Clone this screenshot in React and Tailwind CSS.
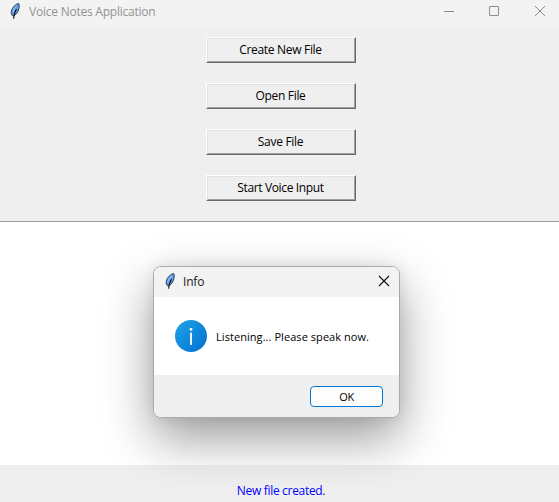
function Feather() {
  return (
    <svg width="10" height="16" viewBox="0 0 10 16" className="shrink-0">
      <path d="M8.7 .5 C5.8 .8 2 4.6 1.3 8.4 C1 10.4 1.5 12 2.6 12.8 L4.8 12.2 C7 10.6 8.6 8 9.1 4.6 C9.4 2.8 9.3 1.4 8.7 .5Z" fill="#5d9be6" stroke="#2b3440" strokeWidth=".9" />
      <path d="M6.6 3 C4.8 4.6 3.2 7 2.8 9.4" fill="none" stroke="#8fbcf2" strokeWidth="1.1" />
      <path d="M6.4 6.2 C4.8 8.8 3.9 11 3.6 15.6" fill="none" stroke="#000" strokeWidth="1.1" />
    </svg>
  );
}

const labels = [
  { text: "Create New File", tracking: "tracking-[-0.31px]" },
  { text: "Open File", tracking: "tracking-[-0.31px]" },
  { text: "Save File", tracking: "tracking-[-0.31px]" },
  { text: "Start Voice Input", tracking: "tracking-[-0.36px]" },
];

function TkButton({ text, tracking }) {
  return (
    <button className="h-[26px] w-[150px] border border-t-white border-l-white border-r-[#696969] border-b-[#696969]">
      <span className={`flex h-full items-center justify-center border border-t-[#e3e3e3] border-l-[#e3e3e3] border-r-[#a0a0a0] border-b-[#a0a0a0] pr-px text-[12px] leading-none whitespace-nowrap text-black ${tracking}`}>
        {text}
      </span>
    </button>
  );
}

function Dialog() {
  return (
    <div className="absolute top-[266px] left-[153px] flex h-[152px] w-[247px] flex-col overflow-hidden rounded-[8px] border border-[#a9abab] bg-white shadow-[0_20px_50px_rgba(0,0,0,0.4),0_0_14px_rgba(0,0,0,0.08)]">
      <div className="flex h-[30px] shrink-0 items-center bg-[#f3f3f3] pl-[11px]">
        <div className="-mt-[2px]">
          <Feather />
        </div>
        <span className="ml-[8px] text-[12px] leading-none tracking-[-0.2px] text-[#1a1a1a]">Info</span>
        <svg width="12" height="12" viewBox="0 0 12 12" className="mr-[9px] -mt-[2px] ml-auto">
          <path d="M1 1 11 11M11 1 1 11" stroke="#111" strokeWidth="1.1" />
        </svg>
      </div>
      <div className="flex h-[78px] shrink-0 items-center pl-[21px]">
        <svg width="32" height="32" viewBox="0 0 32 32" className="shrink-0">
          <defs>
            <linearGradient id="infoFill" x1="0" y1="0" x2="1" y2="1">
              <stop offset="0" stopColor="#20a4e6" />
              <stop offset="1" stopColor="#006fd0" />
            </linearGradient>
          </defs>
          <circle cx="16" cy="16" r="16" fill="url(#infoFill)" />
          <circle cx="16" cy="9.3" r="1.4" fill="#fff" />
          <rect x="15.1" y="12.6" width="1.8" height="12.4" fill="#fff" />
        </svg>
        <span className="ml-[9px] text-[11px] leading-none tracking-[0.06px] whitespace-nowrap text-black">Listening... Please speak now.</span>
      </div>
      <div className="flex flex-1 items-start justify-end bg-[#efefef] pt-[11px] pr-[16px]">
        <button className="flex h-[21px] w-[73px] items-center justify-center rounded-[4px] border border-[#0078d4] bg-[#fdfdfd] text-[11px] leading-none tracking-[-0.3px] text-black">OK</button>
      </div>
    </div>
  );
}

export default function App() {
  return (
    <div className="relative flex h-[502px] w-[559px] flex-col overflow-hidden bg-[#efefef] font-['Open_Sans','Noto_Sans',sans-serif]">
      <div className="flex h-[27px] shrink-0 items-start bg-[#f3f3f3] pt-[3px] pl-[10px]">
        <Feather />
        <span className="ml-[9px] pt-[3px] text-[12px] leading-none tracking-[-0.23px] text-[#929292]">Voice Notes Application</span>
        <svg width="103" height="12" viewBox="0 0 103 12" className="mt-[2px] mr-[12px] ml-auto" fill="none" stroke="#8c8c8c">
          <path d="M0 6.5H10" />
          <rect x="45.5" y="1.5" width="9" height="9" rx=".5" />
          <path d="M91 1 101 11M101 1 91 11" />
        </svg>
      </div>
      <div className="flex h-[194px] shrink-0 flex-col items-center gap-[20px] pt-[10px] pl-[3px]">
        {labels.map((l) => (
          <TkButton key={l.text} {...l} />
        ))}
      </div>
      <div className="h-[244px] shrink-0 border-t border-[#a0a0a0] bg-white" />
      <div className="flex flex-1 justify-center pt-[20px] pl-[3px]">
        <span className="relative z-10 text-[12px] leading-none tracking-[-0.31px] text-[#0000ff]">New file created.</span>
      </div>
      <Dialog />
    </div>
  );
}
